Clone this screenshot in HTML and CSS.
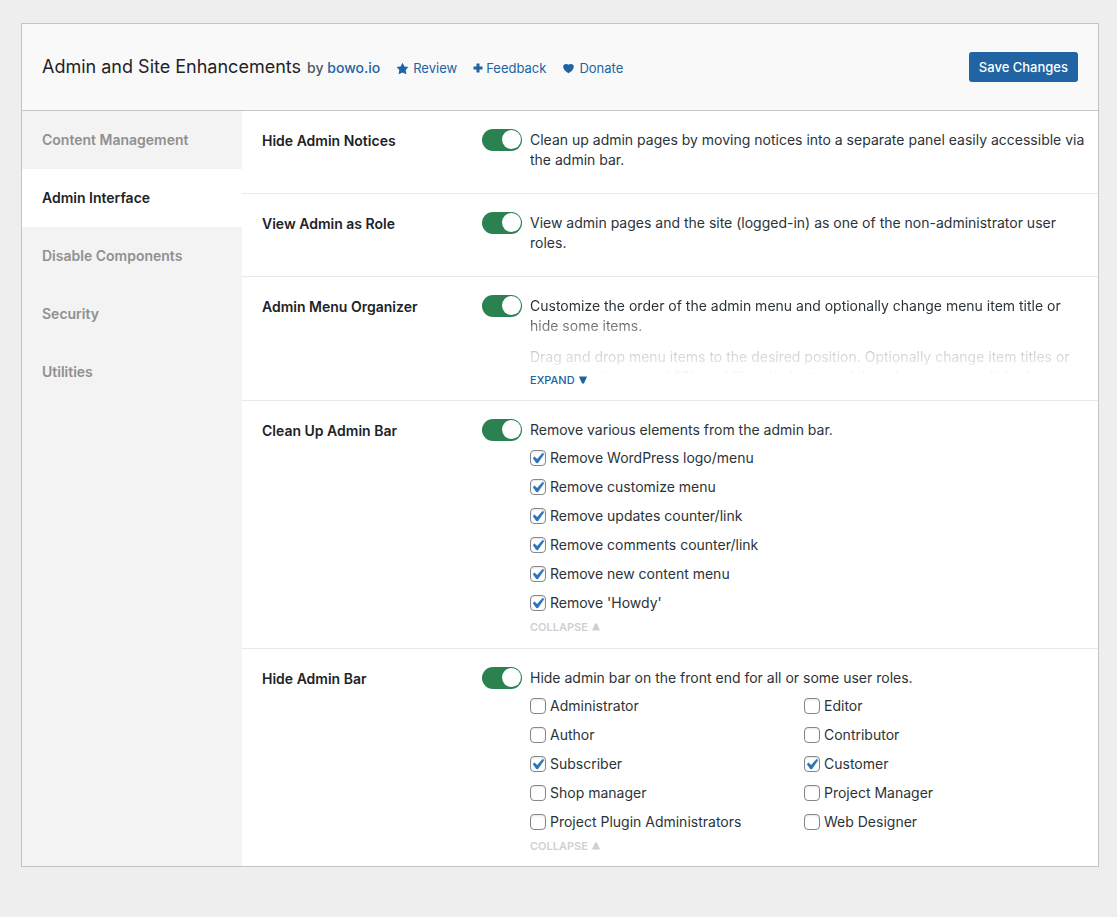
FILE: index.html
```html
<!DOCTYPE html>
<html lang="en">
<head>
<meta charset="utf-8">
<meta name="viewport" content="width=device-width, initial-scale=1">
<title>Admin and Site Enhancements</title>
<link rel="stylesheet" href="styles.css">
</head>
<body>
<form class="panel">
  <header class="header">
    <div class="brand">
      <h1 class="title">Admin and Site Enhancements <small class="byline">by <a href="#">bowo.io</a></small></h1>
      <nav class="links" aria-label="Plugin links">
        <a href="#"><svg class="icon" viewBox="0 0 20 20" aria-hidden="true"><path d="M10 1l3 6 6 .75-4.120 4.620L16 19l-6-3-6 3 1.130-6.630L1 7.750 7 7z"/></svg>Review</a>
        <a href="#"><svg class="icon icon-plus" viewBox="0 0 10 10" aria-hidden="true"><path d="M3.500 .5h3v3h3v3h-3v3h-3v-3h-3v-3h3z"/></svg>Feedback</a>
        <a href="#"><svg class="icon" viewBox="0 0 20 20" aria-hidden="true"><path d="M10 17.120c3.330-1.400 5.740-3.790 7.040-6.210 1.280-2.410 1.460-4.810.320-6.250-1.030-1.290-2.370-1.780-3.730-1.740s-2.680.630-3.630 1.460c-.95-.83-2.270-1.420-3.630-1.460s-2.700.450-3.730 1.740c-1.140 1.440-.96 3.840.34 6.250 1.280 2.420 3.690 4.810 7.020 6.210z"/></svg>Donate</a>
      </nav>
    </div>
    <button class="save" type="submit">Save Changes</button>
  </header>
  <div class="body">
    <nav class="tabs" aria-label="Settings sections">
      <a class="tab" href="#">Content Management</a>
      <a class="tab active" href="#" aria-current="page">Admin Interface</a>
      <a class="tab" href="#">Disable Components</a>
      <a class="tab" href="#">Security</a>
      <a class="tab" href="#">Utilities</a>
    </nav>
    <main class="settings">
      <section class="row">
        <label class="name" for="notices">Hide Admin Notices</label>
        <input class="switch" type="checkbox" id="notices" checked>
        <div class="detail">
          <p>Clean up admin pages by moving notices into a separate panel easily accessible via the admin bar.</p>
        </div>
      </section>
      <section class="row">
        <label class="name" for="role">View Admin as Role</label>
        <input class="switch" type="checkbox" id="role" checked>
        <div class="detail">
          <p>View admin pages and the site (logged-in) as one of the non-administrator user roles.</p>
        </div>
      </section>
      <section class="row expandable">
        <label class="name" for="organizer">Admin Menu Organizer</label>
        <input class="switch" type="checkbox" id="organizer" checked>
        <div class="detail">
          <div class="preview">
            <p>Customize the order of the admin menu and optionally change menu item title or hide some items.</p>
            <p>Drag and drop menu items to the desired position. Optionally change item titles or hide some items until "Show All" at the bottom of the admin menu is clicked.</p>
          </div>
          <button class="more expand" type="button">Expand <svg class="caret" viewBox="0 0 8 8" aria-hidden="true"><path d="M0 .5h8L5 7.500H3z"/></svg></button>
        </div>
      </section>
      <section class="row expandable">
        <label class="name" for="cleanup">Clean Up Admin Bar</label>
        <input class="switch" type="checkbox" id="cleanup" checked>
        <div class="detail">
          <p>Remove various elements from the admin bar.</p>
          <div class="options">
            <label><input type="checkbox" checked>Remove WordPress logo/menu</label>
            <label><input type="checkbox" checked>Remove customize menu</label>
            <label><input type="checkbox" checked>Remove updates counter/link</label>
            <label><input type="checkbox" checked>Remove comments counter/link</label>
            <label><input type="checkbox" checked>Remove new content menu</label>
            <label><input type="checkbox" checked>Remove 'Howdy'</label>
          </div>
          <button class="more collapse" type="button">Collapse <svg class="caret" viewBox="0 0 8 8" aria-hidden="true"><path d="M0 7.500h8L5 .5H3z"/></svg></button>
        </div>
      </section>
      <section class="row expandable">
        <label class="name" for="hidebar">Hide Admin Bar</label>
        <input class="switch" type="checkbox" id="hidebar" checked>
        <div class="detail">
          <p>Hide admin bar on the front end for all or some user roles.</p>
          <div class="options two">
            <label><input type="checkbox">Administrator</label>
            <label><input type="checkbox">Editor</label>
            <label><input type="checkbox">Author</label>
            <label><input type="checkbox">Contributor</label>
            <label><input type="checkbox" checked>Subscriber</label>
            <label><input type="checkbox" checked>Customer</label>
            <label><input type="checkbox">Shop manager</label>
            <label><input type="checkbox">Project Manager</label>
            <label><input type="checkbox">Project Plugin Administrators</label>
            <label><input type="checkbox">Web Designer</label>
          </div>
          <button class="more collapse" type="button">Collapse <svg class="caret" viewBox="0 0 8 8" aria-hidden="true"><path d="M0 7.500h8L5 .5H3z"/></svg></button>
        </div>
      </section>
    </main>
  </div>
</form>
</body>
</html>
```
FILE: styles.css
```css
* {
  box-sizing: border-box;
}

body {
  margin: 0;
  padding: 23px 18px 50px 21px;
  background: #eee;
  color: #2c3338;
  font: 14px/20px Inter, "Liberation Sans", sans-serif;
}

a {
  color: #2064a3;
  text-decoration: none;
}

p {
  margin: 0;
}

.panel {
  border: 1px solid #c3c4c7;
  background: #fff;
}

.header {
  display: flex;
  align-items: center;
  justify-content: space-between;
  padding: 28px 20px;
  border-bottom: 1px solid #c3c7cb;
  background: #f9f9f9;
}

.brand {
  display: flex;
  align-items: baseline;
  gap: 16px;
}

.title {
  margin: 0;
  color: #1d2327;
  font-size: 18px;
  font-weight: 400;
  line-height: 28px;
}

.byline {
  margin-left: 1px;
  color: #50575e;
  font-size: 14px;
  font-weight: 500;
}

.links {
  display: flex;
  gap: 16px;
  font-size: 13px;
}

.icon {
  width: 13px;
  height: 13px;
  margin-right: 4px;
  fill: currentColor;
  vertical-align: -2px;
}

.icon-plus {
  width: 10px;
  height: 10px;
  margin-right: 3px;
  vertical-align: 0;
}

.save {
  height: 30px;
  padding: 0 10px;
  border: 0;
  border-radius: 3px;
  background: #2064a3;
  color: #fff;
  font: 500 13px/20px Inter, "Liberation Sans", sans-serif;
}

.body {
  display: flex;
}

.tabs {
  flex: 0 0 220px;
  background: #f3f3f3;
}

.tab {
  display: block;
  padding: 19px 20px;
  color: #909090;
  font-weight: 600;
}

.tab.active {
  background: #fff;
  color: #1d2327;
}

.settings {
  flex: 1;
  min-width: 0;
}

.row {
  display: grid;
  grid-template-columns: 212px 40px 1fr;
  column-gap: 8px;
  align-items: start;
  padding: 19px 10px 23px 20px;
  border-bottom: 1px solid #e8e8e8;
}

.expandable {
  padding-bottom: 11px;
}

.row:last-child {
  padding-bottom: 10px;
  border-bottom: 0;
}

.name {
  padding-top: 1px;
  color: #1d2327;
  font-weight: 600;
}

.switch {
  appearance: none;
  width: 40px;
  height: 22px;
  margin: -1px 0;
  padding: 1px;
  border-radius: 11px;
  background: #a7aaad;
}

.switch::before {
  content: "";
  display: block;
  width: 19px;
  height: 19px;
  border-radius: 50%;
  background: #fff;
}

.switch:checked {
  background: #2b814f;
}

.switch:checked::before {
  margin-left: 19px;
}

.preview {
  height: 78px;
  overflow: hidden;
  mask-image: linear-gradient(#000 20px, rgba(0, 0, 0, .6) 32px, rgba(0, 0, 0, .2) 60px, transparent 82px);
}

.preview p + p {
  margin-top: 11px;
}

.options {
  display: grid;
  row-gap: 9px;
  margin: 8px 10px 0 0;
}

.options.two {
  grid-template-columns: 1fr 1fr;
}

.options label {
  display: flex;
  align-items: center;
  gap: 4px;
}

.options input {
  appearance: none;
  flex: none;
  width: 16px;
  height: 16px;
  margin: 0;
  border: 1px solid #84878c;
  border-radius: 4px;
  background: #fff;
  box-shadow: inset 0 1px 2px rgba(0, 0, 0, .1);
}

.options input:checked {
  background: #fff url("data:image/svg+xml,%3Csvg xmlns='http://www.w3.org/2000/svg' viewBox='0 0 20 20'%3E%3Cpath d='M14.830 4.890l1.340.94-5.810 8.380H9.020L5.780 9.670l1.340-1.250 2.570 2.400z' fill='%232d74bb' stroke='%232d74bb' stroke-width='.5'/%3E%3C/svg%3E") -4px -3px / 21px 21px no-repeat;
}

.more {
  display: flex;
  align-items: center;
  gap: 4px;
  padding: 0;
  border: 0;
  background: none;
  font: 500 11px/14px Inter, "Liberation Sans", sans-serif;
  text-transform: uppercase;
}

.expand {
  margin-top: -1px;
  padding-bottom: 2px;
  color: #2064a3;
}

.collapse {
  margin-top: 7px;
  padding-bottom: 3px;
  color: #d0d0d0;
  font-weight: 600;
}

.caret {
  width: 8px;
  height: 8px;
  fill: currentColor;
}
```
